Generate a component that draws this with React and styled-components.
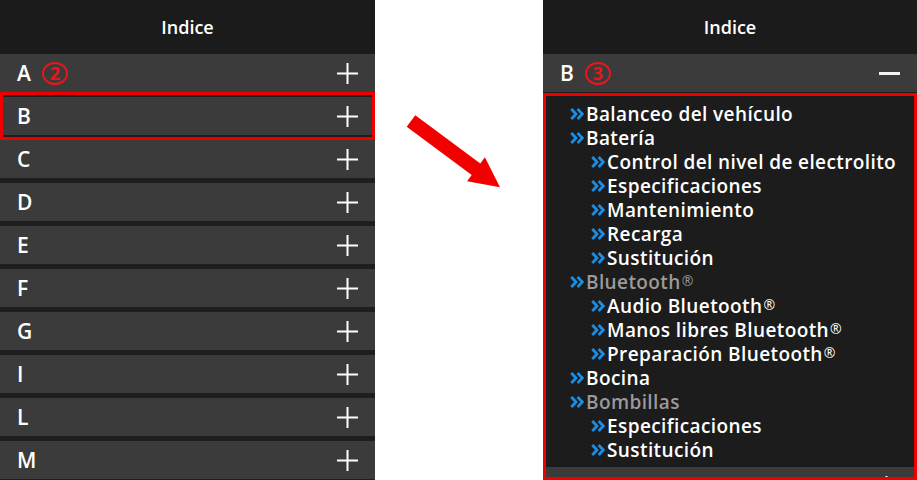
import styled, { createGlobalStyle } from "styled-components";

const GlobalStyle = createGlobalStyle`
  html, body {
    margin: 0;
    padding: 0;
    background: #fff;
  }
  body {
    font-family: "Open Sans", "DejaVu Sans", sans-serif;
  }
`;

const Page = styled.div`
  display: flex;
  width: 917px;
  height: 480px;
  overflow: hidden;
  background: #fff;
`;

const Panel = styled.div`
  width: ${(p) => p.$width}px;
  flex-shrink: 0;
  height: 480px;
  display: flex;
  flex-direction: column;
  gap: 5px;
  background: #1e1e1e;
  overflow: hidden;
`;

const Header = styled.div`
  height: 54px;
  flex-shrink: 0;
  margin-bottom: -5px;
  display: flex;
  align-items: center;
  justify-content: center;
  background: #1b1b1b;
  color: #fff;
  font-size: 18px;
  font-weight: 600;
`;

const Row = styled.div`
  position: relative;
  height: 38px;
  flex-shrink: 0;
  display: flex;
  align-items: center;
  padding: 0 17px;
  background: #3b3b3b;
  color: #fff;
  font-size: 21px;
  font-weight: 600;

  ${(p) =>
    p.$highlight &&
    `
    &::after {
      content: "";
      position: absolute;
      left: 0;
      right: 0;
      top: -5px;
      bottom: -5px;
      border: 3px solid #ee0000;
      pointer-events: none;
    }
  `}
`;

const Letter = styled.span`
  flex: 1;
  display: flex;
  align-items: center;
  gap: 11px;
`;

const Badge = styled.span`
  width: 22px;
  height: 19px;
  border: 2px solid #e8161b;
  border-radius: 50%;
  display: inline-flex;
  align-items: center;
  justify-content: center;
  color: #e8161b;
  font-size: 18px;
  font-weight: 700;
  line-height: 1;
`;

const ArrowArea = styled.div`
  flex: 1;
  padding: 112px 0 0 30px;
`;

const Expanded = styled.div`
  height: 387px;
  box-sizing: border-box;
  flex-shrink: 0;
  margin-top: -4px;
  border: 3px solid #ee0000;
  background: #1c1c1c;
  overflow: hidden;
  display: flex;
  flex-direction: column;
`;

const List = styled.ul`
  list-style: none;
  margin: 0;
  padding: 6px 0 5px 24px;
`;

const Item = styled.li`
  height: 24px;
  display: flex;
  align-items: center;
  padding-left: ${(p) => (p.$level === 2 ? 21 : 0)}px;
  color: ${(p) => (p.$muted ? "#9a9a9a" : "#fff")};
  font-size: 19px;
  letter-spacing: 0.4px;
  font-weight: 600;
  white-space: nowrap;

  svg {
    flex-shrink: 0;
    margin-right: 2px;
  }
`;

const Reg = styled.sup`
  font-size: 14px;
  font-weight: 400;
  position: relative;
  top: -2px;
  margin-left: 1px;
`;

function PlusIcon() {
  return (
    <svg width="21" height="21" viewBox="0 0 21 21">
      <path d="M10.5 0V21M0 10.5H21" stroke="#fff" strokeWidth="2" />
    </svg>
  );
}

function MinusIcon() {
  return (
    <svg width="21" height="21" viewBox="0 0 21 21">
      <path d="M0 10.5H21" stroke="#f2f2f2" strokeWidth="3" />
    </svg>
  );
}

function Chevrons() {
  return (
    <svg width="14" height="12" viewBox="0 0 14 12">
      <path
        d="M1.3 1L6 6L1.3 11M7.6 1L12.3 6L7.6 11"
        fill="none"
        stroke="#1a8fe3"
        strokeWidth="2.8"
      />
    </svg>
  );
}

function BigArrow() {
  return (
    <svg width="97" height="78" viewBox="0 0 97 78">
      <polygon
        points="10.3,3.2 75.3,51.5 79.9,45.3 95,75.3 62.1,69.3 66.7,63.1 1.7,14.8"
        fill="#f20000"
      />
    </svg>
  );
}

const letters = ["A", "B", "C", "D", "E", "F", "G", "I", "L", "M"];

const entries = [
  { text: "Balanceo del vehículo", level: 1 },
  { text: "Batería", level: 1 },
  { text: "Control del nivel de electrolito", level: 2 },
  { text: "Especificaciones", level: 2 },
  { text: "Mantenimiento", level: 2 },
  { text: "Recarga", level: 2 },
  { text: "Sustitución", level: 2 },
  { text: "Bluetooth", level: 1, muted: true, reg: true },
  { text: "Audio Bluetooth", level: 2, reg: true },
  { text: "Manos libres Bluetooth", level: 2, reg: true },
  { text: "Preparación Bluetooth", level: 2, reg: true },
  { text: "Bocina", level: 1 },
  { text: "Bombillas", level: 1, muted: true },
  { text: "Especificaciones", level: 2 },
  { text: "Sustitución", level: 2 },
];

export default function App() {
  return (
    <>
      <GlobalStyle />
      <Page>
        <Panel $width={375}>
          <Header>Indice</Header>
          {letters.map((l) => (
            <Row key={l} $highlight={l === "B"}>
              <Letter>
                {l}
                {l === "A" && <Badge>2</Badge>}
              </Letter>
              <PlusIcon />
            </Row>
          ))}
        </Panel>

        <ArrowArea>
          <BigArrow />
        </ArrowArea>

        <Panel $width={374}>
          <Header>Indice</Header>
          <Row>
            <Letter>
              B<Badge>3</Badge>
            </Letter>
            <MinusIcon />
          </Row>
          <Expanded>
            <List>
              {entries.map((e, i) => (
                <Item key={i} $level={e.level} $muted={e.muted}>
                  <Chevrons />
                  {e.text}
                  {e.reg && <Reg>®</Reg>}
                </Item>
              ))}
            </List>
            <Row>
              <Letter>C</Letter>
              <PlusIcon />
            </Row>
          </Expanded>
        </Panel>
      </Page>
    </>
  );
}
